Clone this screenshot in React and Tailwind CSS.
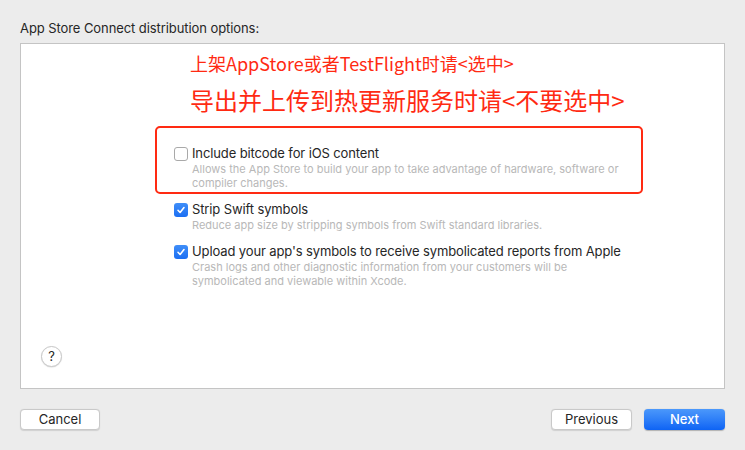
import React from "react";

const FONT = { fontFamily: 'Inter, "Liberation Sans", "Noto Sans CJK SC", sans-serif' };
const CJK = { fontFamily: '"Noto Sans CJK SC", "Liberation Sans", sans-serif' };

function Check({ on }) {
  if (on) {
    return (
      <span className="mt-[2px] flex h-[14px] w-[14px] shrink-0 items-center justify-center rounded-[3px] bg-gradient-to-b from-[#3f8ef8] to-[#1a6ef3]">
        <svg width="10" height="10" viewBox="0 0 10 10">
          <path d="M2 5.3 L4.1 7.5 L8 2.6" fill="none" stroke="#fff" strokeWidth="1.6" strokeLinecap="round" strokeLinejoin="round" />
        </svg>
      </span>
    );
  }
  return <span className="mt-[2px] h-[14px] w-[14px] shrink-0 rounded-[3px] border border-[#a9a9a9] bg-white" />;
}

function Option({ on, label, children }) {
  return (
    <div className="flex gap-[4px]">
      <Check on={on} />
      <div>
        <div className="text-[13px] leading-[16px] tracking-[-0.12px] text-[#262626]">{label}</div>
        <div className="mt-[1px] text-[11px] leading-[14px] text-[#b8b8b8]">{children}</div>
      </div>
    </div>
  );
}

function Btn({ children, primary, className = "" }) {
  if (primary) {
    return (
      <button className={`h-[21px] rounded-[4px] bg-gradient-to-b from-[#4b98fb] to-[#0d63f4] text-[13px] font-medium text-white shadow-[0_0.5px_1px_rgba(0,0,0,0.25)] ${className}`}>
        {children}
      </button>
    );
  }
  return (
    <button className={`h-[21px] rounded-[4px] border border-[#c9c9c9] bg-white text-[13px] text-[#262626] shadow-[0_0.5px_1px_rgba(0,0,0,0.12)] ${className}`}>
      {children}
    </button>
  );
}

export default function App() {
  return (
    <div className="h-[450px] w-[745px] overflow-hidden bg-[#ececec]" style={FONT}>
      <div className="px-[20px] pt-[20px] text-[13px] leading-[16px] tracking-[-0.08px] text-[#262626]">
        App Store Connect distribution options:
      </div>

      <div className="relative mx-[20px] mt-[7px] flex h-[346px] flex-col border border-[#c4c4c4] bg-white">
        {/* red annotations */}
        <div className="pl-[169px] pt-[7px] text-[18px] leading-[24px] text-[#ff2a12]" style={CJK}>
          上架AppStore或者TestFlight时请&lt;选中&gt;
        </div>
        <div className="mt-[9px] pl-[169px] text-[24px] leading-[32px] text-[#ff2a12]" style={CJK}>
          导出并上传到热更新服务时请&lt;不要选中&gt;
        </div>

        <div className="mt-[29px] flex flex-col gap-[11px] pl-[153px]">
          <Option label="Include bitcode for iOS content">
            Allows the App Store to build your app to take advantage of hardware, software or
            <br />
            compiler changes.
          </Option>
          <Option on label="Strip Swift symbols">
            Reduce app size by stripping symbols from Swift standard libraries.
          </Option>
          <Option on label="Upload your app's symbols to receive symbolicated reports from Apple">
            Crash logs and other diagnostic information from your customers will be
            <br />
            symbolicated and viewable within Xcode.
          </Option>
        </div>

        {/* red box annotation */}
        <div className="absolute left-[134px] top-[82px] h-[68px] w-[488px] rounded-[5px] border-2 border-[#ff2a12]" />

        <button className="mb-[21px] ml-[20px] mt-auto flex h-[21px] w-[21px] items-center justify-center rounded-full border border-[#c8c8c8] bg-white text-[13px] text-[#262626] shadow-[0_0.5px_1px_rgba(0,0,0,0.15)]">
          ?
        </button>
      </div>

      <div className="mt-[20px] flex items-center px-[20px]">
        <Btn className="w-[80px]">Cancel</Btn>
        <div className="ml-auto flex gap-[12px]">
          <Btn className="w-[81px]">Previous</Btn>
          <Btn primary className="w-[81px]">Next</Btn>
        </div>
      </div>
    </div>
  );
}
